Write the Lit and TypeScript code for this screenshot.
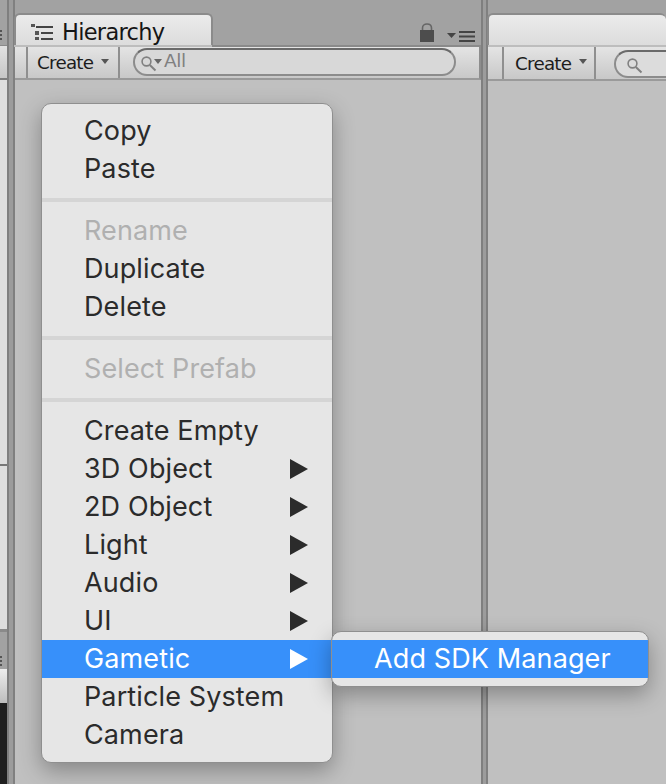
import { LitElement, html, css, svg } from "lit";
import { customElement } from "lit/decorators.js";

type Item = { t?: string; dis?: boolean; sub?: boolean; on?: boolean };
const items: Item[] = [
  { t: "Copy" }, { t: "Paste" }, {},
  { t: "Rename", dis: true }, { t: "Duplicate" }, { t: "Delete" }, {},
  { t: "Select Prefab", dis: true }, {},
  { t: "Create Empty" }, { t: "3D Object", sub: true }, { t: "2D Object", sub: true },
  { t: "Light", sub: true }, { t: "Audio", sub: true }, { t: "UI", sub: true },
  { t: "Gametic", sub: true, on: true }, { t: "Particle System" }, { t: "Camera" },
];

const mag = svg`<circle cx="6.5" cy="6.5" r="4.4" fill="none" stroke="currentColor" stroke-width="1.6"/><path d="M9.8 10L15.500 15.500" stroke="currentColor" stroke-width="2"/>`;

@customElement("app-root")
export class AppRoot extends LitElement {
  static styles = css`
    :host { display: block; width: 666px; height: 784px; overflow: hidden; position: relative; background: #a2a2a2; font-family: "Inter", "Liberation Sans", sans-serif; }
    .row { display: flex; height: 784px; }
    .left { width: 7px; display: flex; flex-direction: column; flex: none; }
    .l-top { height: 45px; display: flex; align-items: flex-end; padding-bottom: 5px; box-sizing: border-box; flex: none; }
    .dots { display: flex; flex-direction: column; gap: 2px; }
    .dots i { display: block; width: 2px; height: 2px; background: #555; }
    .l-tool { height: 35px; background: linear-gradient(#e2e2e2, #c6c6c6); border-top: 1px solid #8a8a8a; border-bottom: 2px solid #7d7d7d; box-sizing: border-box; flex: none; }
    .l-a { height: 384px; background: #dedede; flex: none; }
    .l-line { height: 2px; background: #777; flex: none; }
    .l-b { height: 163px; background: #dedede; border-bottom: 3px solid #8a8a8a; flex: none; }
    .l-gap { height: 37px; display: flex; align-items: flex-end; padding-bottom: 3px; box-sizing: border-box; flex: none; }
    .l-tool2 { height: 34px; background: linear-gradient(#ededed, #bdbdbd); flex: none; }
    .l-dark { flex: 1; background: #1f1f1f; }
    .split { width: 8px; flex: none; background: #9c9c9c; border-left: 2px solid #7f7f7f; border-right: 2px solid #808080; box-sizing: border-box; }
    .split.narrow { width: 7px; }
    .panel { display: flex; flex-direction: column; flex: none; }
    .hier { width: 466px; }
    .right { flex: 1; min-width: 0; }
    .tabs { display: flex; padding-top: 13px; position: relative; flex: none; height: 32px; align-items: stretch; }
    .tab { background: linear-gradient(#ebebeb, #dcdcdc); border: 2px solid #8b8b8b; border-bottom: 0; border-radius: 6px 6px 0 0; box-sizing: border-box; display: flex; align-items: center; gap: 8px; padding: 3px 0 0 14px; font: 22.5px "DejaVu Sans", sans-serif; color: #151515; letter-spacing: -0.72px; }
    .tab.h { width: 199px; margin-left: -1px; }
    .tab.r { flex: 1; border-right: 0; margin-left: -1px; }
    .tools { margin-left: auto; margin-right: 6px; display: flex; align-items: flex-end; gap: 12px; padding-bottom: 3px; }
    .bar { height: 35px; flex: none; box-sizing: border-box; background: linear-gradient(#e4e4e4, #c8c8c8); border-top: 2px solid #8a8a8a; border-bottom: 2px solid #9a9a9a; border-right: 2px solid #8d8d8d; display: flex; align-items: stretch; position: relative; }
    .bar.under { border-top-color: #bdbdbd; }
    .right .bar { border-right: 0; height: 36px; }
    .notch { position: absolute; left: -1px; top: -2px; width: 198px; height: 2px; background: #bdbdbd; }
    .spacer { width: 11px; border-right: 2px solid #8f8f8f; flex: none; }
    .btn { width: 92px; border-right: 2px solid #8f8f8f; flex: none; display: flex; align-items: center; gap: 8px; padding-left: 9px; box-sizing: border-box; font: 18.3px "DejaVu Sans", sans-serif; letter-spacing: -0.75px; color: #1c1c1c; }
    .caret { width: 0; height: 0; border: 4px solid transparent; border-top: 5px solid #555; border-bottom: 0; margin-top: -3px; }
    .search { flex: 1; margin: 1px 23px 2px 13px; box-sizing: border-box; border: 2px solid #8c8c8c; border-top-color: #6a6a6a; border-radius: 14px; background: #d8d8d8; display: flex; align-items: center; color: #808080; font: 18.5px "DejaVu Sans", sans-serif; padding-left: 5px; letter-spacing: -0.4px; }
    .search span.all { margin-top: -4px; }
    .right .search { margin: 3px -40px 1px 18px; background: #dcdcdc; padding-left: 10px; }
    .search svg { width: 17px; height: 17px; flex: none; margin-top: 3px; }
    .search .caret { margin: -2px 2px 0 -3px; border-top-color: #666; }
    .body { flex: 1; background: #c0c0c0; }
    .menu, .sub { position: absolute; background: #e6e6e6; border: 1px solid #8f8f8f; box-sizing: border-box; box-shadow: 0 8px 22px rgba(0,0,0,.3); color: #2b2b2b; font-size: 27px; letter-spacing: 0.12px; }
    .menu { left: 41px; top: 103px; width: 292px; height: 660px; border-radius: 10px; padding-top: 8px; }
    .sub { left: 331px; top: 631px; width: 318px; height: 56px; border-radius: 10px; padding-top: 8px; }
    .it { height: 38px; display: flex; align-items: center; padding: 0 24px 0 42px; justify-content: space-between; line-height: 38px; }
    .it.dis { color: #b0b0b0; }
    .it.on { background: #3790fa; color: #fff; }
    .tri { width: 0; height: 0; border-left: 18px solid currentColor; border-top: 10px solid transparent; border-bottom: 10px solid transparent; }
    .sep { height: 24px; display: flex; align-items: center; }
    .sep i { display: block; width: 100%; height: 4px; background: #d5d5d5; }
  `;

  render() {
    return html`
      <div class="row">
        <div class="left">
          <div class="l-top"><div class="dots"><i></i><i></i><i></i></div></div>
          <div class="l-tool"></div>
          <div class="l-a"></div>
          <div class="l-line"></div>
          <div class="l-b"></div>
          <div class="l-gap"><div class="dots"><i></i><i></i><i></i></div></div>
          <div class="l-tool2"></div>
          <div class="l-dark"></div>
        </div>
        <div class="split"></div>
        <div class="panel hier">
          <div class="tabs">
            <div class="tab h">
              <svg width="24" height="18" viewBox="0 0 24 18"><path d="M1 1h4v3H1zM5 8h4v4H5zM5 14h4v3H5z" fill="#555"/><path d="M6 4h17M11 10h12M11 16h12" stroke="#444" stroke-width="2"/></svg>
              Hierarchy
            </div>
            <div class="tools">
              <svg width="16" height="19" viewBox="0 0 16 19"><path d="M1 7h14v12H1z" fill="#4d4d4d"/><path d="M3.500 7V5C3.500 2.500 5.500 1 8 1s4.500 1.500 4.500 4V7" fill="none" stroke="#666" stroke-width="1.6"/></svg>
              <svg width="28" height="11" viewBox="0 0 28 11"><path d="M0 2h9L4.500 7z" fill="#444"/><path d="M12 1h16M12 5.500h16M12 10h16" stroke="#444" stroke-width="2"/></svg>
            </div>
          </div>
          <div class="bar">
            <div class="notch"></div>
            <div class="spacer"></div>
            <div class="btn">Create <span class="caret"></span></div>
            <div class="search"><svg viewBox="0 0 17 17">${mag}</svg><span class="caret"></span><span class="all">All</span></div>
          </div>
          <div class="body"></div>
        </div>
        <div class="split narrow"></div>
        <div class="panel right">
          <div class="tabs"><div class="tab r"></div></div>
          <div class="bar under">
            <div class="spacer" style="width:14px"></div>
            <div class="btn" style="padding-left:11px">Create <span class="caret"></span></div>
            <div class="search"><svg viewBox="0 0 17 17">${mag}</svg></div>
          </div>
          <div class="body"></div>
        </div>
      </div>
      <div class="menu">
        ${items.map((i) => i.t
          ? html`<div class="it ${i.dis ? "dis" : ""} ${i.on ? "on" : ""}"><span>${i.t}</span>${i.sub ? html`<span class="tri"></span>` : ""}</div>`
          : html`<div class="sep"><i></i></div>`)}
      </div>
      <div class="sub"><div class="it on"><span>Add SDK Manager</span></div></div>
    `;
  }
}
